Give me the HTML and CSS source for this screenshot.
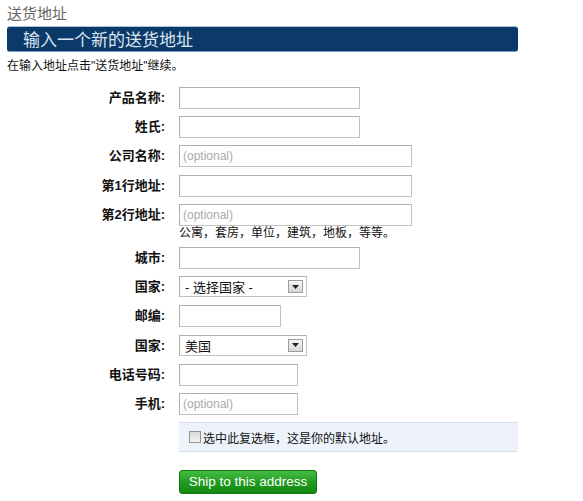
FILE: index.html
```html
<!DOCTYPE html>
<html lang="zh-CN">
<head>
<meta charset="utf-8">
<title>送货地址</title>
<link rel="stylesheet" href="styles.css">
</head>
<body>
<div class="page">
  <h1 class="title">送货地址</h1>
  <div class="bar">输入一个新的送货地址</div>
  <p class="intro">在输入地址点击"送货地址"继续。</p>
  <form class="form">
    <div class="row"><label class="lbl">产品名称:</label><input class="inp w-md" type="text"></div>
    <div class="row"><label class="lbl">姓氏:</label><input class="inp w-md" type="text"></div>
    <div class="row"><label class="lbl">公司名称:</label><input class="inp w-lg" type="text" placeholder="(optional)"></div>
    <div class="row"><label class="lbl">第1行地址:</label><input class="inp w-lg" type="text"></div>
    <div class="row">
      <label class="lbl">第2行地址:</label>
      <div class="field">
        <input class="inp w-lg" type="text" placeholder="(optional)">
        <div class="hint">公寓，套房，单位，建筑，地板，等等。</div>
      </div>
    </div>
    <div class="row"><label class="lbl">城市:</label><input class="inp w-md" type="text"></div>
    <div class="row"><label class="lbl">国家:</label>
      <div class="sel"><span>- 选择国家 -</span><span class="arrow"><svg width="7" height="4" viewBox="0 0 7 4"><path d="M0 0H7L3.5 4Z" fill="#222"/></svg></span></div>
    </div>
    <div class="row"><label class="lbl">邮编:</label><input class="inp w-sm" type="text"></div>
    <div class="row"><label class="lbl">国家:</label>
      <div class="sel"><span>美国</span><span class="arrow"><svg width="7" height="4" viewBox="0 0 7 4"><path d="M0 0H7L3.5 4Z" fill="#222"/></svg></span></div>
    </div>
    <div class="row"><label class="lbl">电话号码:</label><input class="inp w-ph" type="text"></div>
    <div class="row"><label class="lbl">手机:</label><input class="inp w-ph" type="text" placeholder="(optional)"></div>
    <div class="opt"><input class="chk" type="checkbox"><span>选中此复选框，这是你的默认地址。</span></div>
    <button class="ship" type="button">Ship to this address</button>
  </form>
</div>
</body>
</html>
```

FILE: styles.css
```css
html, body {
  margin: 0;
  padding: 0;
  background: #ffffff;
}
body {
  font-family: "Liberation Sans", "Noto Sans CJK SC", sans-serif;
  color: #111;
}
.page {
  width: 511px;
  padding: 0 0 0 7px;
}
.title {
  margin: 0;
  padding-top: 3px;
  font-size: 15px;
  line-height: 20px;
  font-weight: normal;
  color: #666;
  font-family: "Noto Sans CJK SC", sans-serif;
}
.bar {
  margin-top: 3px;
  height: 26px;
  box-sizing: border-box;
  background: #0b3a6a;
  border-top: 1px solid #a9c2da;
  border-bottom: 1px solid #7c9cbc;
  border-radius: 3px;
  color: #dbe5f0;
  font-size: 17px;
  line-height: 24px;
  padding-left: 16px;
  font-family: "Noto Sans CJK SC", sans-serif;
}
.intro {
  margin: 7px 0 0;
  font-size: 12px;
  line-height: 14px;
  color: #111;
}
.form {
  margin-top: 14px;
}
.row {
  display: flex;
  align-items: flex-start;
  margin-bottom: 7.2px;
}
.lbl {
  flex: 0 0 172px;
  box-sizing: border-box;
  padding-right: 14px;
  text-align: right;
  font-weight: bold;
  font-size: 13px;
  line-height: 22px;
  color: #111;
}
.field {
  display: flex;
  flex-direction: column;
}
.inp {
  box-sizing: border-box;
  height: 22px;
  margin: 0;
  padding: 0 3px;
  border: 1px solid #c2c2c2;
  border-top-color: #b0b0b0;
  border-left-color: #b0b0b0;
  background: #fff;
  font-family: "Liberation Sans", sans-serif;
  font-size: 12px;
  outline: none;
}
.inp::placeholder {
  color: #aaa;
}
.w-md { width: 181px; }
.w-lg { width: 233px; }
.w-sm { width: 102px; }
.w-ph { width: 119px; }
.hint {
  font-size: 12px;
  line-height: 14px;
  margin-top: 0;
  color: #111;
}
.sel {
  box-sizing: border-box;
  width: 128px;
  height: 21px;
  border: 1px solid #c2c2c2;
  border-top-color: #b0b0b0;
  border-left-color: #b0b0b0;
  display: flex;
  align-items: center;
  justify-content: space-between;
  padding: 0 3px 0 5px;
  font-size: 13px;
  color: #111;
}
.arrow {
  box-sizing: border-box;
  width: 15px;
  height: 13px;
  border: 1px solid #9c9c9c;
  background: linear-gradient(#f6f6f6, #d6d6d6);
  display: flex;
  align-items: center;
  justify-content: center;
}
.arrow svg {
  display: block;
}
.opt {
  margin-left: 172px;
  height: 30px;
  box-sizing: border-box;
  background: #eef3fb;
  border-top: 1px solid #d3deec;
  border-bottom: 1px solid #d3deec;
  display: flex;
  align-items: center;
  padding-left: 10px;
  font-size: 12px;
  color: #111;
}
.chk {
  appearance: none;
  -webkit-appearance: none;
  width: 12px;
  height: 12px;
  margin: 0 2px 0 0;
  border: 1px solid #949494;
  background: linear-gradient(#d8d8d8, #f4f4f4);
  box-sizing: border-box;
}
.ship {
  display: block;
  margin: 18px 0 0 172px;
  width: 138px;
  height: 24px;
  padding: 0;
  border: 1px solid #137a13;
  border-radius: 3px;
  background: linear-gradient(#45bd45, #1f9a1f 55%, #128812);
  color: #fff;
  font-family: "Liberation Sans", sans-serif;
  font-size: 13.5px;
  line-height: 22px;
  cursor: pointer;
}
```
